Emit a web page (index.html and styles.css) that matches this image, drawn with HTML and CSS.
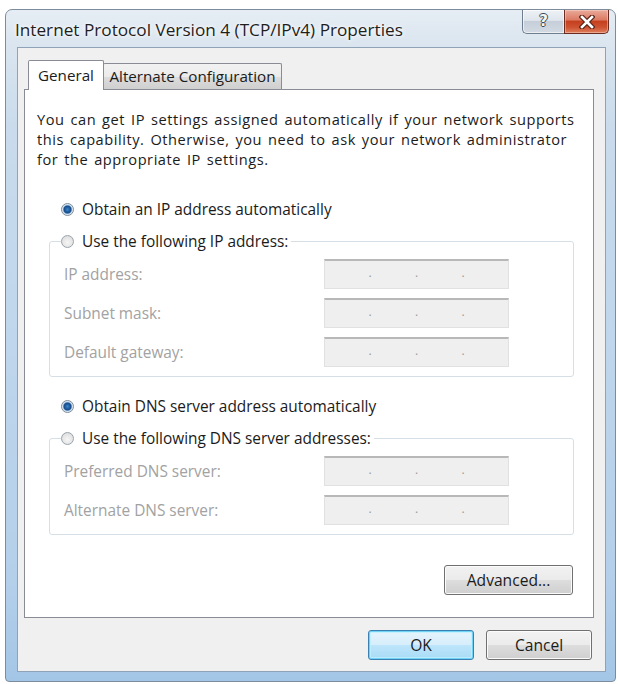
FILE: index.html
```html
<!DOCTYPE html>
<html lang="en">
<head>
<meta charset="utf-8">
<title>Internet Protocol Version 4 (TCP/IPv4) Properties</title>
<link rel="stylesheet" href="styles.css">
</head>
<body>
<div class="window">
  <div class="titlebar">
    <span class="title">Internet Protocol Version 4 (TCP/IPv4) Properties</span>
    <div class="caption-buttons">
      <div class="cbtn help"><span class="help-glyph">?</span></div>
      <div class="cbtn close">
        <svg width="16" height="14" viewBox="0 0 16 14">
          <path d="M3 2 L13 12 M13 2 L3 12" stroke="#5a2418" stroke-width="5" stroke-linecap="square" fill="none"/>
          <path d="M3 2 L13 12 M13 2 L3 12" stroke="#ffffff" stroke-width="2.6" stroke-linecap="square" fill="none"/>
        </svg>
      </div>
    </div>
  </div>
  <div class="client">
    <div class="tabs">
      <div class="tab active">General</div>
      <div class="tab alt">Alternate Configuration</div>
    </div>
    <div class="panel">
      <p class="intro">You can get IP settings assigned automatically if your network supports<br>this capability. Otherwise, you need to ask your network administrator<br>for the appropriate IP settings.</p>

      <div class="radio-row first"><span class="radio checked"></span>Obtain an IP address automatically</div>
      <fieldset class="group">
        <legend><span class="radio"></span>Use the following IP address:</legend>
        <div class="field"><span class="label">IP address:</span><div class="ip"><span>.</span><span>.</span><span>.</span></div></div>
        <div class="field"><span class="label">Subnet mask:</span><div class="ip"><span>.</span><span>.</span><span>.</span></div></div>
        <div class="field"><span class="label">Default gateway:</span><div class="ip"><span>.</span><span>.</span><span>.</span></div></div>
      </fieldset>

      <div class="radio-row second"><span class="radio checked"></span>Obtain DNS server address automatically</div>
      <fieldset class="group">
        <legend><span class="radio"></span>Use the following DNS server addresses:</legend>
        <div class="field"><span class="label">Preferred DNS server:</span><div class="ip"><span>.</span><span>.</span><span>.</span></div></div>
        <div class="field"><span class="label">Alternate DNS server:</span><div class="ip"><span>.</span><span>.</span><span>.</span></div></div>
      </fieldset>

      <div class="adv-row"><button class="btn adv">Advanced...</button></div>
    </div>
    <div class="dialog-buttons">
      <button class="btn default">OK</button>
      <button class="btn">Cancel</button>
    </div>
  </div>
</div>
</body>
</html>
```
FILE: styles.css
```css
* { box-sizing: border-box; }

html, body {
  margin: 0;
  padding: 0;
  background: #ffffff;
}

body {
  font-family: "Open Sans", "Noto Sans", "DejaVu Sans", sans-serif;
  font-size: 15.4px;
  color: #1b1b1b;
}

.window {
  margin: 9px 0 0 5px;
  width: 611px;
  height: 673px;
  border: 1px solid #7d8c9c;
  border-radius: 7px 7px 4px 4px;
  background: linear-gradient(to bottom, #e6edf4 0px, #dae5ef 36px, #c9dbec 120px, #bfd6ec 50%, #b4cfea 85%, #a4c6e6 100%);
  display: flex;
  flex-direction: column;
  overflow: hidden;
}

.titlebar {
  height: 37px;
  display: flex;
  justify-content: space-between;
  align-items: flex-start;
}

.title {
  margin: 10px 0 0 9px;
  font-size: 17.2px;
  line-height: 20px;
  color: #1e1e1e;
  text-shadow: 0 0 6px #ffffff, 0 0 3px #ffffff;
}

.caption-buttons {
  display: flex;
  margin: 0 6px 0 0;
}

.cbtn {
  height: 24px;
  display: flex;
  align-items: center;
  justify-content: center;
  border: 1px solid #6f7e8e;
  border-top: none;
}

.help {
  width: 42px;
  border-radius: 0 0 0 5px;
  border-right: none;
  background: linear-gradient(to bottom, #eef2f6 0%, #dfe5ec 45%, #c6cfd9 50%, #d2dae3 100%);
  box-shadow: inset 0 0 0 1px rgba(255,255,255,0.6);
}

.help-glyph {
  font-family: "DejaVu Sans", sans-serif;
  font-weight: bold;
  font-size: 15px;
  line-height: 15px;
  color: #f4f6f8;
  text-shadow: -1px 0 #3f4a56, 1px 0 #3f4a56, 0 -1px #3f4a56, 0 1px #3f4a56;
}

.close {
  width: 45px;
  border-radius: 0 0 5px 0;
  border-color: #6a2b20;
  background: linear-gradient(to bottom, #e9ab9b 0%, #dc7b64 42%, #c5401f 50%, #cd5231 75%, #e0805f 100%);
  box-shadow: inset 0 0 0 1px rgba(255,220,210,0.45);
}

.client {
  flex: 1;
  margin: 0 9px 9px 11px;
  border: 1px solid #8ea3b8;
  background: #f0f0f0;
  display: flex;
  flex-direction: column;
  padding: 12px 0 11px 6px;
}

.tabs {
  display: flex;
  align-items: flex-start;
  height: 30px;
  margin-bottom: -1px;
  padding-left: 4px;
  position: relative;
  z-index: 1;
}

.tab {
  height: 26px;
  margin-top: 3px;
  border: 1px solid #898c95;
  border-bottom: none;
  border-radius: 2px 2px 0 0;
  background: linear-gradient(to bottom, #f2f2f2 0%, #ebebeb 50%, #dddddd 51%, #cfcfcf 100%);
  font-size: 15.2px;
  line-height: 24px;
  text-align: center;
  white-space: nowrap;
  color: #1b1b1b;
}

.tab.active {
  width: 76px;
  height: 30px;
  margin-top: 0;
  margin-right: -1px;
  background: #ffffff;
  line-height: 28px;
  position: relative;
  z-index: 2;
}

.tab.alt {
  width: 179px;
}

.panel {
  flex: 1;
  margin-right: 11px;
  border: 1px solid #898c95;
  background: #ffffff;
  padding: 18.5px 0 0 12px;
  display: flex;
  flex-direction: column;
}

.intro {
  margin: 0;
  font-size: 14.6px;
  letter-spacing: 0.55px;
  word-spacing: 1.6px;
  line-height: 20px;
  white-space: nowrap;
  color: #1b1b1b;
}

.radio-row,
legend {
  display: flex;
  align-items: center;
  height: 20px;
  white-space: nowrap;
  color: #1b1b1b;
}

.radio-row {
  margin-left: 24px;
}

.radio-row.first { margin-top: 30.5px; }
.radio-row.second { margin-top: 19px; }

.radio {
  flex: none;
  width: 13px;
  height: 13px;
  margin-right: 8px;
  border-radius: 50%;
  border: 1px solid #9aa3ab;
  background: radial-gradient(circle at 50% 60%, #f6f6f6 0%, #e4e4e4 60%, #d4d6d8 100%);
}

.radio.checked {
  border-color: #7f8b97;
  background: radial-gradient(circle at 50% 50%, #3d86c8 0px, #1f5a9c 2.5px, #174a86 3.5px, #9cc4e8 4.5px, #e8f1f9 5.2px, #d6dde4 6px);
}

.group {
  margin: 12px 19px 0 12px;
  padding: 8px 0 9px 0;
  border: 1px solid #d5dfe5;
  border-radius: 3px;
}

.group legend {
  margin-left: 11px;
  padding: 0 3px 0 0;
}

.field {
  display: flex;
  align-items: center;
  height: 30px;
  padding-left: 14px;
}

.field + .field {
  margin-top: 9px;
}

.label {
  width: 260px;
  color: #a2a2a2;
}

.ip {
  width: 185px;
  height: 30px;
  border: 1px solid #e1e1e1;
  border-top: 2px solid #b8b8b8;
  background: #efefef;
  display: flex;
  justify-content: space-evenly;
  align-items: center;
  color: #9a9a9a;
  font-size: 12px;
  line-height: 12px;
  padding-bottom: 3px;
}

.adv-row {
  margin-top: 30px;
  margin-right: 20px;
  display: flex;
  justify-content: flex-end;
}

.btn {
  height: 30px;
  width: 106px;
  padding: 0;
  border: 1px solid #707070;
  border-radius: 3px;
  background: linear-gradient(to bottom, #f2f2f2 0%, #ebebeb 50%, #dddddd 51%, #cfcfcf 100%);
  box-shadow: inset 0 0 0 1px #fbfbfb;
  font-family: inherit;
  font-size: 15.6px;
  color: #1b1b1b;
}

.btn.adv {
  width: 129px;
}

.btn.default {
  border-color: #3c7fb1;
  background: linear-gradient(to bottom, #e5f4fc 0%, #d6eefb 50%, #bde5fb 51%, #a9dbf6 100%);
  box-shadow: inset 0 0 0 1px #6ed3f5, inset 0 0 0 2px rgba(190,240,255,0.8);
}

.dialog-buttons {
  display: flex;
  justify-content: flex-end;
  gap: 12px;
  margin-top: 12px;
  padding-right: 13px;
}
```
